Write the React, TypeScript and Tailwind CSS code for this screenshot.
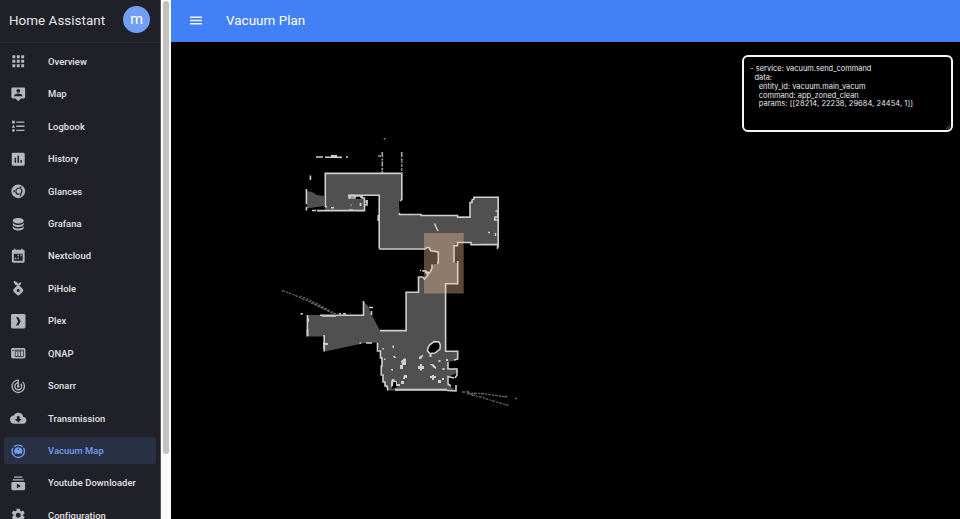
import type { ReactNode } from "react";
import { MdApps, MdAssessment, MdCloudDownload, MdSettings } from "react-icons/md";

function Glyph({ children }: { children: ReactNode }) {
  return (
    <svg viewBox="0 0 24 24" className="size-full fill-current">
      {children}
    </svg>
  );
}

const icons = {
  map: (
    <Glyph>
      <path d="M4 2H20A2 2 0 0 1 22 4V16A2 2 0 0 1 20 18H16L12 22L8 18H4A2 2 0 0 1 2 16V4A2 2 0 0 1 4 2M12 4.3A2.7 2.7 0 1 0 12 9.7A2.7 2.7 0 1 0 12 4.3M6 15H18V14.1C18 12.1 14 11 12 11C10 11 6 12.1 6 14.1Z" fillRule="evenodd" />
    </Glyph>
  ),
  logbook: (
    <Glyph>
      <path d="M5 9.5L7.5 14H2.5L5 9.5M3 4H7V8H3V4M5 20A2 2 0 0 0 7 18A2 2 0 0 0 5 16A2 2 0 0 0 3 18A2 2 0 0 0 5 20M9 5V7H21V5H9M9 19H21V17H9V19M9 13H21V11H9V13Z" />
    </Glyph>
  ),
  glances: (
    <Glyph>
      <circle cx="12" cy="12" r="10" />
      <circle cx="12.8" cy="12" r="4.4" fill="none" stroke="#202128" strokeWidth="1.7" />
      <g fill="#202128" stroke="#b5b6bb" strokeWidth="0.8">
        <circle cx="6.2" cy="12" r="1.8" />
        <circle cx="15.4" cy="6.6" r="1.8" />
        <circle cx="15.4" cy="17.4" r="1.8" />
      </g>
    </Glyph>
  ),
  database: (
    <Glyph>
      <path d="M12 3C7.58 3 4 4.79 4 7C4 9.21 7.58 11 12 11C16.42 11 20 9.21 20 7C20 4.79 16.42 3 12 3M4 9V12C4 14.21 7.58 16 12 16C16.42 16 20 14.21 20 12V9C20 11.21 16.42 13 12 13C7.58 13 4 11.21 4 9M4 14V17C4 19.21 7.58 21 12 21C16.42 21 20 19.21 20 17V14C20 16.21 16.42 18 12 18C7.58 18 4 16.21 4 14Z" />
    </Glyph>
  ),
  calendar: (
    <Glyph>
      <path d="M5 2.6H6V1H8V2.6H16V1H18V2.6H19A2.2 2.2 0 0 1 21.3 5V19A2.2 2.2 0 0 1 19 21.3H5A2.2 2.2 0 0 1 2.7 19V5A2.2 2.2 0 0 1 5 2.6M5.6 8.2V18.4H18.4V8.2Z" fillRule="evenodd" />
      <path d="M10.8 9.6H13V12H10.8ZM14.8 9.6H17.2V12H14.8ZM6.8 13.8H9.2V16.4H6.8ZM10.8 13.8H13V16.4H10.8Z" opacity="0.75" />
    </Glyph>
  ),
  pihole: (
    <Glyph>
      <path d="M5.2 1.5C8.9 1.7 11.3 3.4 11.9 6.1C12.3 4.5 13.9 3.2 16.3 3.1C16.4 5.7 15 7.7 12.5 8.5C14 8.9 14.8 9.3 15.7 10.2L18.6 13.1A3 3 0 0 1 18.6 17L14.1 21.5A3 3 0 0 1 9.9 21.5L5.4 17A3 3 0 0 1 5.4 13.1L8.3 10.2C9.2 9.3 10 8.8 11.2 8.5C7.7 7.8 5.3 5.3 5.2 1.5M12 12.9A2.2 2.2 0 1 0 12 17.3A2.2 2.2 0 1 0 12 12.9" fillRule="evenodd" />
    </Glyph>
  ),
  plex: (
    <Glyph>
      <path d="M3.5 1.5H20.5A2 2 0 0 1 22.5 3.5V20.5A2 2 0 0 1 20.5 22.5H3.5A2 2 0 0 1 1.5 20.5V3.5A2 2 0 0 1 3.5 1.5M8.8 6L11.8 12L8.8 18H12.2L15.5 12L12.2 6Z" fillRule="evenodd" />
    </Glyph>
  ),
  nas: (
    <Glyph>
      <path d="M4 4.5C2.6 4.5 1.6 5.5 1.6 7V17C1.6 18.5 2.6 19.5 4 19.5H20C21.4 19.5 22.4 18.5 22.4 17V7C22.4 5.5 21.4 4.5 20 4.5H4M4.5 7A1 1 0 0 1 5.5 8A1 1 0 0 1 4.5 9A1 1 0 0 1 3.5 8A1 1 0 0 1 4.5 7M7 7H20V17H7V7M8 8V16H11V8H8M12 8V16H15V8H12M16 8V16H19V8H16M9 9H10V10H9V9M13 9H14V10H13V9M17 9H18V10H17V9Z" />
    </Glyph>
  ),
  radar: (
    <Glyph>
      <path d="M19.07 4.93L17.66 6.34C19.1 7.79 20 9.79 20 12A8 8 0 0 1 12 20A8 8 0 0 1 4 12C4 7.92 7.05 4.56 11 4.07V6.09C8.16 6.57 6 9.03 6 12A6 6 0 0 0 12 18A6 6 0 0 0 18 12C18 10.34 17.33 8.84 16.24 7.76L14.83 9.17C15.55 9.9 16 10.9 16 12A4 4 0 0 1 12 16A4 4 0 0 1 8 12C8 10.14 9.28 8.59 11 8.14V10.28C10.4 10.63 10 11.26 10 12A2 2 0 0 0 12 14A2 2 0 0 0 14 12C14 11.26 13.6 10.62 13 10.28V2H12A10 10 0 0 0 2 12A10 10 0 0 0 12 22A10 10 0 0 0 22 12C22 9.24 20.88 6.74 19.07 4.93Z" />
    </Glyph>
  ),
  vacuum: (
    <Glyph>
      <path d="M12 2C14.65 2 17.19 3.06 19.07 4.93L17.65 6.35C16.15 4.85 14.12 4 12 4C9.88 4 7.84 4.84 6.35 6.35L4.93 4.93C6.81 3.06 9.35 2 12 2M3.66 6.5L5.11 7.94C4.39 9.17 4 10.57 4 12A8 8 0 0 0 12 20A8 8 0 0 0 20 12C20 10.57 19.61 9.17 18.88 7.94L20.34 6.5C21.42 8.12 22 10.04 22 12A10 10 0 0 1 12 22A10 10 0 0 1 2 12C2 10.04 2.58 8.12 3.66 6.5M12 6A6 6 0 0 1 18 12C18 13.59 17.37 15.12 16.24 16.24L14.83 14.83C14.08 15.58 13.06 16 12 16C10.94 16 9.92 15.58 9.17 14.83L7.76 16.24C6.63 15.12 6 13.59 6 12A6 6 0 0 1 12 6M12 8A1 1 0 0 0 11 9A1 1 0 0 0 12 10A1 1 0 0 0 13 9A1 1 0 0 0 12 8Z" />
    </Glyph>
  ),
  youtube: (
    <Glyph>
      <path d="M20 8H4V6H20V8M18 2H6V4H18V2M22 12V20A2 2 0 0 1 20 22H4A2 2 0 0 1 2 20V12A2 2 0 0 1 4 10H20A2 2 0 0 1 22 12M16 16L10 12.73V19.26L16 16Z" />
    </Glyph>
  ),
};

const items: { label: string; icon: ReactNode; active?: boolean }[] = [
  { label: "Overview", icon: <MdApps className="size-full scale-107" /> },
  { label: "Map", icon: icons.map },
  { label: "Logbook", icon: icons.logbook },
  { label: "History", icon: <MdAssessment className="size-full scale-105" /> },
  { label: "Glances", icon: icons.glances },
  { label: "Grafana", icon: icons.database },
  { label: "Nextcloud", icon: icons.calendar },
  { label: "PiHole", icon: icons.pihole },
  { label: "Plex", icon: icons.plex },
  { label: "QNAP", icon: icons.nas },
  { label: "Sonarr", icon: icons.radar },
  { label: "Transmission", icon: <MdCloudDownload className="size-full" /> },
  { label: "Vacuum Map", icon: icons.vacuum, active: true },
  { label: "Youtube Downloader", icon: icons.youtube },
  { label: "Configuration", icon: <MdSettings className="size-full" /> },
];

function Sidebar() {
  return (
    <aside className="h-full w-[160px] shrink-0 overflow-hidden bg-[#202128]">
      <div className="flex h-[42.5px] items-center justify-between border-b border-[#2d2e35] pr-[10px] pb-[3px] pl-[9px]">
        <h1 className="pt-[3px] text-[13.4px] tracking-[0.05px] whitespace-nowrap text-[#e6e6e8]">Home Assistant</h1>
        <div className="flex size-[27px] items-center justify-center rounded-full bg-[#729ff5] text-[14.5px] leading-none text-white">
          <span className="pt-px">m</span>
        </div>
      </div>
      <nav className="flex flex-col gap-[5.45px] pt-[5.6px] pl-[4px]">
        {items.map((item) => (
          <a
            key={item.label}
            className={
              item.active
                ? "flex h-[27px] w-[151.5px] shrink-0 items-center rounded-[2.5px] bg-[#2a3043] pl-[6px] text-[#729ff5]"
                : "flex h-[27px] w-[151.5px] shrink-0 items-center pl-[6px] text-[#e2e2e4]"
            }
          >
            <span className={item.active ? "size-[16.5px] text-[#729ff5]" : "size-[16.5px] text-[#b5b6bb]"}>{item.icon}</span>
            <span className="ml-[21.5px] pt-[0.5px] text-[9.4px] font-medium tracking-[0.05px] whitespace-nowrap">{item.label}</span>
          </a>
        ))}
      </nav>
    </aside>
  );
}

function FloorPlan() {
  return (
    <svg viewBox="171 42 789 477" className="absolute inset-0 size-full" fill="none">
      <g fill="#505050">
        <path d="M325 173H402V199L399 203L400 214.5L436 216L470 216V203L474 197H498V244.5L470 243.5L457 242L453.5 246V263H457.7V284H446V351H457.7V360L448 362V368.5H457V373L447.5 377V384L455.5 390.5H388L383.3 382L381 360L379.5 351L376.7 342.7L365 343L325 351.5L324 336.5H307.5V315H363.3V301L368 306L371.7 315L380 330.5H406V292.3H418.5V277L424 279L432 268V264H438.5V252L431 250.7L428.3 247L425 248.7H379V195H348V199H364V210.5H325Z" />
        <path d="M306.7 191L312 192L317 195L324 196V206L306.7 208.5Z" />
      </g>
      <g fill="#000">
        <path d="M432 251H435V258L437 262L432 266L430 258ZM456 245H458V262H456Z" />
        <path d="M392 386L395 381L398 381L396 384L399 384L397 387L392 389Z" />
        <path d="M399 201L402 200V214H400Z" />
      </g>
      <g stroke="#cfcfcf" strokeWidth="1.6">
        <path d="M325.3 207V173.4H401.8V199.5L400.3 201" />
        <path d="M379.2 249H425L427 247.5H429L430.7 250.7L438.3 252V262.8L437 263.5" />
        <path d="M379.2 248.5V195.2H349V199M348 196H362V198L364.5 198V210.6H317M364.5 205H367V200" />
        <path d="M399.5 213V214.5H421V215.5H457.5V217.2H470V202.5H472V200L474 199V197.2H498.2V247.5" />
        <path d="M495.5 211H498V217H495L494.7 220H498M498 244.6H471V242.5H457.5V245.7H454V262.8M457.7 261V283.8H445.6V351.2H457.7V359L454 360" />
        <path d="M448 362V369H457V375L455 378M454 378L448 376.5V384L451 386M447 390.5L456 391V385" />
        <path d="M388 390.5L387 386H385V382H383V375H381.3V366H382V358H380.5V351H377.5V342.7" />
        <path d="M395 389.7H447" strokeWidth="2" />
        <path d="M380 330.6H406.1V292.3H418.5V277H422.5L424.5 279L428 275L426 272.5H430L432 268V264.5" />
        <path d="M363.5 301V315.2H320M307.4 315V336.5M324.2 335V351.5" />
        <path d="M429 274L426 271H423V270M421 270.5H420" />
        <path d="M427.5 350.5L428 347.5L430 344.5L434 341.6L439 342L440.3 345L440 349L435 353L429.5 353.5Z" fill="#000" strokeWidth="1.6" />
      </g>
      <g stroke="#d0d0d0">
        <path d="M316 157H323M325 157.2H342M331 155.7H337M346 157H348" strokeWidth="1.4" />
        <path d="M382.3 152V173M401.7 152V160" strokeWidth="1.6" stroke="#a8a8a8" strokeDasharray="5 1.5 2 1" />
        <path d="M401.7 160V174" stroke="#858585" strokeWidth="1.5" strokeDasharray="3 1" />
        <path d="M378 156H381M384.5 138V139.5" stroke="#999" strokeWidth="1.5" />
        <path d="M310.4 175.5V180M306.4 189V204M306.4 207V210.5M312 210.5H316" strokeWidth="1.6" />
        <path d="M350 195.6H355V198H350ZM360 197H363M331 207.8H334M349 210H353M325 206.8H327" strokeWidth="1.5" />
        <path d="M360.5 203V206M366.5 200V203M378.3 215V221M308 318V322M307.5 329V336M323 344H328M324.2 342V349" strokeWidth="1.8" />
        <path d="M322 316H336M339 313.8H341M343 313.8H346M300.5 313.8H303M359.5 343H361M366 343H372" strokeWidth="1.5" />
        <path d="M369 307.5H373M371.5 311V315M434.5 223.5L436 227L438 231" strokeWidth="1.5" />
        <path d="M488 232.5H490M495.5 233V236M497.5 246V249" strokeWidth="1.5" />
      </g>
      <g fill="#cfcfcf">
        <path d="M401 361L404 358.5H406V365H403V369H400V365H402ZM419 357L423 354.5V356L421 359H419ZM420 364H422V366H424V369H422V370.5H420V369H418V366H420ZM430 364H433L436 367V369L434 368ZM432 375H434V376H436V378H434V380H432V378H430V376H432ZM404 375H407V378H405V379H403ZM392 379H394L395 381H397V384H396V382H393V386L391 387V382ZM401 381H404V384H401ZM396 384H400V386H396ZM438 380H441V383H438ZM442 378H444V380H442Z" />
        <path d="M392.5 345.5H394V348H392.5ZM382.5 348H384V349.5H382.5ZM384 358.5H385.5V360H384ZM393 356H395L396 358H394ZM391 369H393V371L391 370ZM438.5 360H440.5V362H438.5ZM446 359H448V361H446ZM442.5 368H444.5V370H442.5ZM429.5 354H431.5V357H429.5Z" />
        <path d="M350 204H352V206H350Z" fill="#599b45" />
      </g>
      <g stroke="#646464" strokeWidth="1.3" strokeDasharray="3 1.2 2 0.8">
        <path d="M282 290.5L294 295L315 304L336 315" />
        <path d="M300 296L310 300L323 307L336 314M311 303L326 310" strokeDasharray="2 1.5" />
        <path d="M462 392H467M467 393.5H482L499 396L507 397M472 395L481 397L490 400L498 402.5L509 405.5" />
        <path d="M515 398.5H517M505 396.5H507M467 391L472 395" />
      </g>
      <rect x="424" y="233" width="39.7" height="60.5" fill="#ffc89a" fillOpacity="0.36" />
    </svg>
  );
}

function CommandBox() {
  return (
    <div className="absolute top-[13.3px] right-[6.7px] h-[77px] w-[211.5px] rounded-[6px] border-2 border-[#f5f5f5] bg-black pt-[8px] pl-[6.5px] font-['Inter',sans-serif] text-[7.4px] leading-[8.8px] whitespace-pre text-[#ededed]">
      <div className="tracking-[0.03px]">- service: vacuum.send_command</div>
      <div className="pl-[4.2px]">data:</div>
      <div className="pl-[8.4px] tracking-[0.03px]">entity_id: vacuum.main_vacum</div>
      <div className="pl-[8.4px] tracking-[0.03px]">command: app_zoned_clean</div>
      <div className="pl-[8.4px] tracking-[0.1px]">params: [[28214, 22238, 29684, 24454, 1]]</div>
      <svg viewBox="0 0 6 6" className="absolute right-0 bottom-0 size-[6px]" stroke="#888" strokeWidth="0.6">
        <path d="M1 5L5 1M3 5L5 3" />
      </svg>
    </div>
  );
}

export default function App() {
  return (
    <div className="flex h-[519px] w-[960px] overflow-hidden bg-black font-['Roboto',sans-serif]">
      <Sidebar />
      <div className="w-[11px] shrink-0 border-l border-[#555559] bg-[#fafafa]">
        <div className="mt-px ml-[2px] h-[452.5px] w-[6px] rounded-full bg-[#c1c1c1]" />
      </div>
      <main className="flex min-w-0 flex-1 flex-col">
        <header className="flex h-[42px] shrink-0 items-center bg-[#4281f5] pl-[19px] text-white">
          <svg viewBox="0 0 12 10" className="h-[10px] w-[12px] fill-[#f1f5ff]">
            <path d="M0 0.5H12V1.9H0ZM0 3.8H12V5.2H0ZM0 7.1H12V8.5H0Z" />
          </svg>
          <h2 className="ml-[24px] text-[13.4px] tracking-[0.05px]">Vacuum Plan</h2>
        </header>
        <section className="relative flex-1">
          <FloorPlan />
          <CommandBox />
        </section>
      </main>
    </div>
  );
}
